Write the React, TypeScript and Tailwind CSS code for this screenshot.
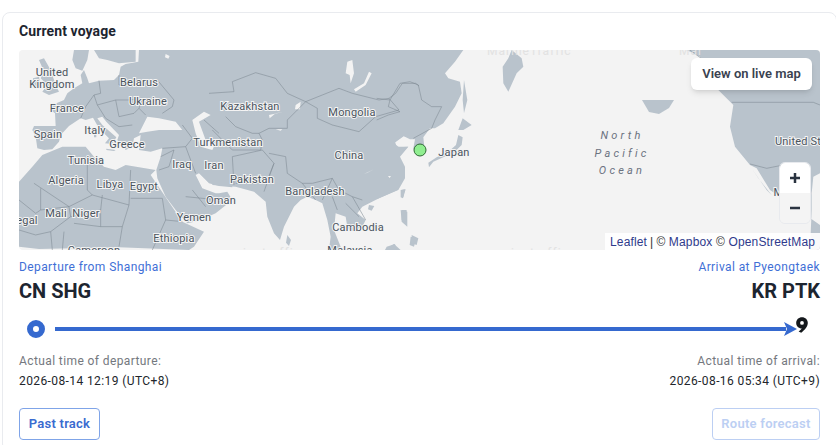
const labels = [
  { t: "United", x: 33, y: 26 },
  { t: "Kingdom", x: 33, y: 38 },
  { t: "Belarus", x: 120, y: 36 },
  { t: "Ukraine", x: 129, y: 55 },
  { t: "France", x: 48, y: 62 },
  { t: "Italy", x: 76, y: 84 },
  { t: "Spain", x: 29, y: 88 },
  { t: "Greece", x: 108, y: 98 },
  { t: "Tunisia", x: 67, y: 114 },
  { t: "Algeria", x: 47, y: 134 },
  { t: "Libya", x: 91, y: 138 },
  { t: "Egypt", x: 125, y: 140 },
  { t: "Mali", x: 37, y: 167 },
  { t: "Niger", x: 67, y: 167 },
  { t: "egal", x: 8, y: 174 },
  { t: "Yemen", x: 175, y: 171 },
  { t: "Ethiopia", x: 155, y: 192 },
  { t: "Cameroon", x: 75, y: 204 },
  { t: "Oman", x: 202, y: 154 },
  { t: "Iraq", x: 163, y: 118 },
  { t: "Iran", x: 195, y: 119 },
  { t: "Turkmenistan", x: 209, y: 96 },
  { t: "Kazakhstan", x: 231, y: 60 },
  { t: "Mongolia", x: 333, y: 66 },
  { t: "China", x: 330, y: 109 },
  { t: "Pakistan", x: 233, y: 133 },
  { t: "Bangladesh", x: 296, y: 145 },
  { t: "Cambodia", x: 339, y: 181 },
  { t: "Malaysia", x: 331, y: 204 },
  { t: "Japan", x: 435, y: 106 },
  { t: "United States", x: 790, y: 95 },
  { t: "Mexico", x: 773, y: 146 },
];

const ocean = [
  { t: "North", y: 89 },
  { t: "Pacific", y: 107 },
  { t: "Ocean", y: 124 },
];

const WorldMap = () => (
  <svg viewBox="0 0 801 200" className="block h-[200px] w-[801px] bg-[#f3f3f3]">
    <g fill="#b9c3cc">
      {/* Europe, Africa, Middle East */}
      <g transform="scale(0.3333)">
        <path d="M640 0L360 0 358 35 320 42 305 50 300 75 285 90 240 92 210 100 205 85 195 60 185 75 190 100 165 115 145 130 135 150 100 165 95 180 108 190 110 228 45 228 40 240 50 260 55 295 75 300 100 298 120 275 125 255 150 228 185 205 200 210 222 203 240 235 270 265 258 280 280 282 292 262 250 225 235 205 250 200 262 215 300 255 295 270 320 300 340 290 345 265 365 255 360 300 395 305 430 295 425 320 412 360 415 385 440 440 470 480 505 520 540 512 590 490 640 450 625 425 600 430 590 430 550 415 530 375 540 370 570 400 600 408 640 412Z" />
        <path d="M0 395L40 350 70 315 130 290 200 290 225 320 255 350 290 360 320 345 410 360 395 375 490 515 555 545 525 590 510 600 300 592 60 597 0 590Z" />
        <path d="M165 0L210 0 205 30 190 62 170 55 160 30ZM225 0L350 0 350 35 300 40 265 30 240 25Z" />
        <path d="M60 30L75 25 95 60 110 105 120 125 90 135 70 125 85 105 65 85 75 65ZM42 85L60 80 65 110 42 112Z" />
        <path d="M225 240L232 240 232 262 225 262ZM262 296L290 300 285 303 262 300Z" />
      </g>
      {/* Central and south-east Asia */}
      <g transform="translate(200 0) scale(0.3333)">
        <path d="M-20 0H600V250L580 265 555 258 525 280 540 292 567 290 540 320 555 350 555 385 535 420 480 445 430 470 415 490 440 510 430 530 395 545 385 530 380 500 350 490 345 540 365 590 375 600 330 600 335 560 325 510 310 460 290 450 265 440 245 450 225 470 195 530 183 570 165 550 145 500 140 455 105 425 50 410-20 405Z" />
        <path d="M545 420L558 418 552 445 545 442ZM450 465L466 468 458 482 447 478ZM205 555L216 570 210 588 201 578ZM545 480L565 485 565 530 548 515ZM575 560L592 565 585 590 572 585ZM505 595L525 582 545 600H500Z" />
      </g>
      {/* Korea, Russian far east, Japan */}
      <g transform="translate(361 0) scale(0.3333)">
        <path d="M-10 0H250L225 35 195 70 205 85 240 95 245 130 225 170 190 220 165 235 150 235 130 262 135 310 112 318 100 295 105 268 90 268 70 258 45 275 50 290 85 290 60 320 75 350 75 385 55 420-10 448Z" />
        <path d="M395 0L425 25 430 50 410 70 385 125 370 100 368 50 385 25Z" />
        <path d="M248 205L275 225 250 240 235 240ZM235 255L248 262 245 285 220 310 190 322 160 335 147 352 145 338 170 322 205 305 228 285ZM252 90L262 150 252 190 248 150Z" />
        <path d="M65 480L80 480 78 515 65 510ZM65 420L77 418 70 442 63 440ZM95 555L115 565 110 585 95 580ZM20 590L45 582 50 600H15Z" />
      </g>
      {/* Kamchatka */}
      <path d="M623 50H655L650 58 640 64 630 62Z" />
      {/* North America */}
      <g transform="translate(651 0) scale(0.3333)">
        <path d="M50 0L90 20 145 120 175 150 190 165 180 230 195 290 240 345 260 355 300 420 330 440 400 490 450 525V600H420L425 480 425 430 430 380 450 370V0Z" />
        <path d="M245 355L290 420 305 435 265 385Z" />
      </g>
    </g>

    {/* lakes and inland seas */}
    <g fill="#f3f3f3">
      <g transform="scale(0.3333)">
        <path d="M360 250L385 200 420 205 470 215 490 240 420 240 385 245ZM520 210L555 185 575 195 540 215 560 270 590 280 580 300 545 290 530 250Z" />
        <path d="M440 12L452 18 448 26 438 22Z" />
      </g>
      <g transform="translate(200 0) scale(0.3333)">
        <path d="M450 65L458 70 440 105 410 125 405 118 435 100ZM385 35L400 30 405 70 395 100 392 75 380 70ZM150 195L195 185 170 190 152 205ZM230 165L245 155 243 178 228 178ZM170 238L190 238 185 242ZM435 372L465 358 445 368ZM507 378L516 378 512 384Z" />
      </g>
    </g>

    {/* country borders */}
    <g fill="none" stroke="#7b8690" strokeWidth="1.6">
      <g transform="scale(0.3333)">
        <path d="M240 92L245 130 225 135 235 165 290 150 330 150 370 145 360 175 380 195M225 135L200 170 185 205M290 150L300 200 345 190 360 175M235 165L260 205 300 230 340 225M360 100L300 105 300 75M415 90L465 150 460 170 430 190M490 225L520 265 500 290 530 370M430 295L500 290M425 320L465 300 450 350 420 360M555 210L600 250" />
        <path d="M45 400L150 470 220 435 330 465 335 360M335 445H430M205 330L205 420 220 435M65 415L65 480 150 470M0 450L50 490 65 480M150 470L155 500 245 480 250 435M245 480L245 530 310 530 330 465M310 530L300 590M155 500L95 545 50 555 0 540M95 545L100 600M135 545L130 600M165 520L245 530M430 445L440 510 490 515M440 510L400 600M500 440L600 450M520 420L560 470" />
      </g>
      <g transform="translate(200 0) scale(0.3333)">
        <path d="M-30 130L45 125 40 95 110 68 170 85 205 130 260 155 235 180 205 210 205 235 150 235 120 250 100 250 50 230 20 200M260 155L310 135 360 115 400 130 480 150 510 145 540 180 470 200 420 245 340 225 295 205 295 175 260 155M510 145L530 130 550 100 590 100 600 108M-20 240L40 300 125 300 130 270 120 250M40 320L130 300 165 340 145 390 100 400 50 400M40 320L45 405M165 340L135 425M150 310L200 320 205 370 250 400 280 400 340 385 360 420 400 440 430 450M250 400L290 450M340 385L310 450M340 440L355 480M380 460L420 500M400 440L440 510" />
      </g>
      <g transform="translate(361 0) scale(0.3333)">
        <path d="M-10 145L30 150 60 100 90 95 115 105 125 150 155 170 185 170 165 210 155 235 100 265M-10 210L25 195 60 185 25 170 30 150" />
      </g>
      <g transform="translate(651 0) scale(0.3333)">
        <path d="M60 0L100 30M185 157H430L450 165M240 342L290 355 340 345 380 360" />
      </g>
    </g>

    <g className="fill-[#e2e2e2] text-[12px]" letterSpacing="1">
      <text x="468" y="5">MarineTraffic</text>
      <text x="660" y="5">Mar</text>
      <text x="468" y="207">marinetraffic</text>
      <text x="200" y="207">marinetraffic</text>
    </g>

    <g className="fill-[#4a545e] text-[11px]" textAnchor="middle" stroke="#f3f3f3" strokeWidth="2" paintOrder="stroke" letterSpacing="0.2">
      {labels.map((l) => (
        <text key={l.t} x={l.x} y={l.y}>
          {l.t}
        </text>
      ))}
    </g>

    <g className="fill-[#6b7280] text-[11px] italic" textAnchor="middle" letterSpacing="3.2">
      {ocean.map((l) => (
        <text key={l.t} x={603} y={l.y}>
          {l.t}
        </text>
      ))}
    </g>

    <circle cx="401" cy="100" r="6" fill="#90ee90" stroke="#2f6b34" strokeWidth="1" />
  </svg>
);

export default function App() {
  return (
    <div className="h-[445px] w-[836px] overflow-hidden bg-white font-[Roboto,sans-serif]">
      <div className="ml-0.5 mt-3 h-[440px] w-[835px] rounded-lg border border-[#e9ebef] px-4 pt-2.5">
        <h2 className="h-[17px] text-[14px] font-bold leading-[17px] tracking-[0.1px] text-[#1d2530]">Current voyage</h2>

        {/* Map */}
        <div className="relative mt-2.5 h-[200px] w-[801px] overflow-hidden rounded">
          <WorldMap />
          <button className="absolute right-2 top-2 h-8 w-[121px] rounded-md bg-white text-[13px] font-semibold text-[#3a4250] shadow-md">
            View on live map
          </button>
          <div className="absolute right-[9px] top-28 flex w-8 flex-col overflow-hidden rounded-md border border-[#e8eaee]">
            <div className="flex h-[30px] items-center justify-center bg-white text-[#2a3340]">
              <svg width="12" height="12" viewBox="0 0 12 12">
                <path d="M6 1V11M1 6H11" stroke="currentColor" strokeWidth="2.5" />
              </svg>
            </div>
            <div className="flex h-[30px] items-center justify-center bg-[#f4f4f4] text-[#2a3340]">
              <svg width="12" height="12" viewBox="0 0 12 12">
                <path d="M1 6H11" stroke="currentColor" strokeWidth="2.5" />
              </svg>
            </div>
          </div>
          <div className="absolute bottom-0 right-0 flex h-[17px] w-[215px] items-center bg-white/90 px-[5px] font-['Liberation_Sans',sans-serif] text-[12px] tracking-[0.15px] text-[#333]">
            <span className="text-[#2e3a8c]">Leaflet</span>
            <span className="mx-[3px]">|</span>
            <span>©&nbsp;</span>
            <span className="text-[#2e3a8c]">Mapbox</span>
            <span>&nbsp;©&nbsp;</span>
            <span className="text-[#2e3a8c]">OpenStreetMap</span>
          </div>
        </div>

        {/* Ports */}
        <div className="mt-[9px] flex justify-between">
          <div>
            <div className="text-[12px] leading-[17px] tracking-[0.4px] text-[#3f6fd6]">Departure from Shanghai</div>
            <div className="mt-[3px] text-[20px] font-bold leading-[24px] text-[#1d2530]">CN SHG</div>
          </div>
          <div className="text-right">
            <div className="text-[12px] leading-[17px] tracking-[0.4px] text-[#3f6fd6]">Arrival at Pyeongtaek</div>
            <div className="mt-[3px] text-[20px] font-bold leading-[24px] text-[#1d2530]">KR PTK</div>
          </div>
        </div>

        {/* Progress track */}
        <div className="mt-4 flex h-5 items-center">
          <svg width="18" height="18" viewBox="0 0 18 18" className="ml-2 shrink-0">
            <circle cx="9" cy="9" r="6" fill="#fff" stroke="#3569cf" strokeWidth="6" />
          </svg>
          <div className="ml-[10px] h-1 w-[731px] shrink-0 bg-[#3569cf]" />
          <svg width="13" height="14" viewBox="0 0 13 14" className="-ml-[2px] shrink-0">
            <path d="M0 0L13 7 0 14 3 7Z" fill="#3569cf" />
          </svg>
          <svg width="12" height="16" viewBox="0 0 12 16" className="-ml-[1px] -mt-2 shrink-0">
            <path fillRule="evenodd" d="M6 0.3C9.3 0.3 11.8 2.7 11.8 5.9 11.8 9.6 8.6 12.8 5.2 15.7L2.6 14.5C4 13.3 5 12.4 5.8 11.4 2.6 11.4 0.2 9 0.2 5.9 0.2 2.7 2.7 0.3 6 0.3ZM6 4A1.9 1.9 0 1 0 6 7.8 1.9 1.9 0 1 0 6 4Z" fill="#14181c" />
          </svg>
        </div>

        {/* Times */}
        <div className="mt-3 flex justify-between text-[12px] leading-5 tracking-[0.4px]">
          <div>
            <div className="text-[#74787e]">Actual time of departure:</div>
            <div className="text-[#22262b]">2026-08-14 12:19 (UTC+8)</div>
          </div>
          <div className="text-right">
            <div className="text-[#74787e]">Actual time of arrival:</div>
            <div className="text-[#22262b]">2026-08-16 05:34 (UTC+9)</div>
          </div>
        </div>

        {/* Actions */}
        <div className="mt-[17px] flex justify-between">
          <button className="h-8 w-[81px] rounded border border-[#7fa4e8] text-[13px] font-semibold tracking-[0.25px] text-[#3a6bd0]">
            Past track
          </button>
          <button className="h-8 w-[108px] rounded border border-[#bccff3] text-[13px] font-semibold tracking-[0.25px] text-[#bccff3]">
            Route forecast
          </button>
        </div>
      </div>
    </div>
  );
}
